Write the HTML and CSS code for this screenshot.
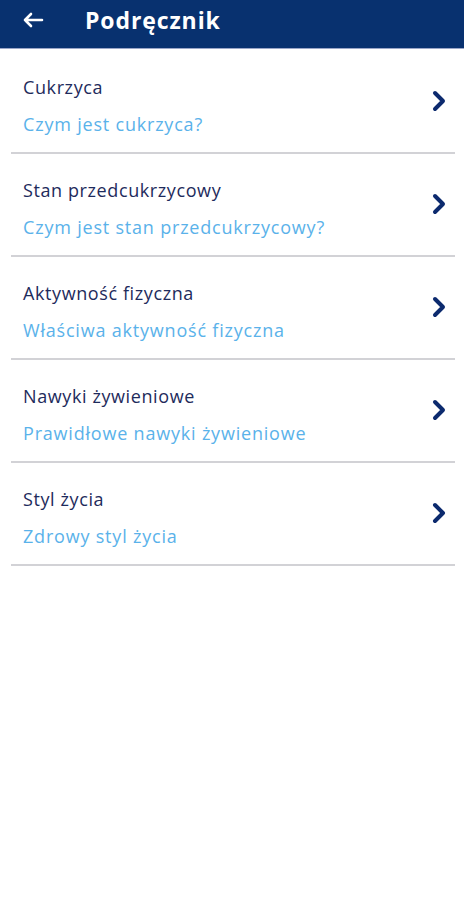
FILE: index.html
```html
<!DOCTYPE html>
<html lang="pl">
<head>
  <meta charset="UTF-8" />
  <title>Podręcznik</title>
  <link rel="stylesheet" href="styles.css">
</head>
<body>

  <header class="topbar">
    <span class="back">
      <svg width="22" height="16" viewBox="0 0 22 16">
        <path d="M20 8H3M9 2L3 8l6 6" fill="none" stroke="#fff" stroke-width="2.6" stroke-linecap="round" stroke-linejoin="round"/>
      </svg>
    </span>
    <h1>Podręcznik</h1>
  </header>

  <ul class="list">
    <li class="item">
      <div class="text">
        <div class="title">Cukrzyca</div>
        <div class="sub">Czym jest cukrzyca?</div>
      </div>
      <svg class="chev" width="16" height="24" viewBox="0 0 16 24"><path d="M4 4l8 8-8 8" fill="none" stroke="#0c2a6e" stroke-width="4" stroke-linecap="round" stroke-linejoin="round"/></svg>
    </li>
    <li class="item">
      <div class="text">
        <div class="title">Stan przedcukrzycowy</div>
        <div class="sub">Czym jest stan przedcukrzycowy?</div>
      </div>
      <svg class="chev" width="16" height="24" viewBox="0 0 16 24"><path d="M4 4l8 8-8 8" fill="none" stroke="#0c2a6e" stroke-width="4" stroke-linecap="round" stroke-linejoin="round"/></svg>
    </li>
    <li class="item">
      <div class="text">
        <div class="title">Aktywność fizyczna</div>
        <div class="sub">Właściwa aktywność fizyczna</div>
      </div>
      <svg class="chev" width="16" height="24" viewBox="0 0 16 24"><path d="M4 4l8 8-8 8" fill="none" stroke="#0c2a6e" stroke-width="4" stroke-linecap="round" stroke-linejoin="round"/></svg>
    </li>
    <li class="item">
      <div class="text">
        <div class="title">Nawyki żywieniowe</div>
        <div class="sub">Prawidłowe nawyki żywieniowe</div>
      </div>
      <svg class="chev" width="16" height="24" viewBox="0 0 16 24"><path d="M4 4l8 8-8 8" fill="none" stroke="#0c2a6e" stroke-width="4" stroke-linecap="round" stroke-linejoin="round"/></svg>
    </li>
    <li class="item">
      <div class="text">
        <div class="title">Styl życia</div>
        <div class="sub">Zdrowy styl życia</div>
      </div>
      <svg class="chev" width="16" height="24" viewBox="0 0 16 24"><path d="M4 4l8 8-8 8" fill="none" stroke="#0c2a6e" stroke-width="4" stroke-linecap="round" stroke-linejoin="round"/></svg>
    </li>
  </ul>

</body>
</html>
```

FILE: styles.css
```css
body {
  margin: 0;
  background: #fff;
  font-family: "Open Sans", "Noto Sans", sans-serif;
}
.topbar {
  display: flex;
  align-items: center;
  height: 40px;
  padding: 0 0 8px 22px;
  background: #08316f;
  border-bottom: 1px solid #9aa6c8;
}
.back {
  display: flex;
  width: 63px;
}
.topbar h1 {
  margin: 0;
  color: #fff;
  font-size: 23px;
  font-weight: 700;
  letter-spacing: 0.9px;
}
.list {
  list-style: none;
  margin: 0 9px 0 11px;
  padding: 0;
}
.item {
  display: flex;
  align-items: center;
  padding: 24px 8px 17px 12px;
  border-bottom: 2px solid #d2d2d6;
}
.item:first-child {
  padding-top: 26px;
}
.text {
  flex: 1;
}
.title {
  font-size: 18px;
  line-height: 24px;
  color: #1e2b5c;
  letter-spacing: 0.6px;
}
.sub {
  margin-top: 14px;
  font-size: 18px;
  line-height: 22px;
  color: #5ab2ea;
  letter-spacing: 0.8px;
}
.chev {
  margin-bottom: 8px;
}
```
